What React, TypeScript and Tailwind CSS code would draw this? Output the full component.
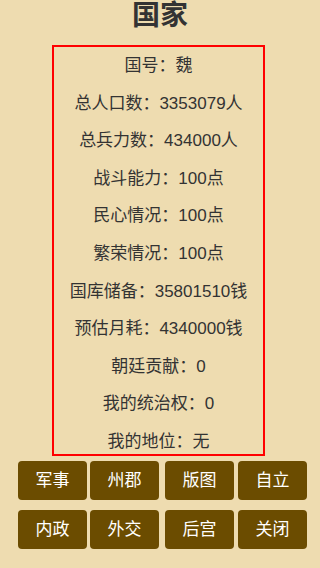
const rows = [
  "国号：魏",
  "总人口数：3353079人",
  "总兵力数：434000人",
  "战斗能力：100点",
  "民心情况：100点",
  "繁荣情况：100点",
  "国库储备：35801510钱",
  "预估月耗：4340000钱",
  "朝廷贡献：0",
  "我的统治权：0",
  "我的地位：无",
];

const row1 = [
  { label: "军事", cls: "ml-[18px]" },
  { label: "州郡", cls: "ml-[3px]" },
  { label: "版图", cls: "ml-[6px]" },
  { label: "自立", cls: "ml-[4px]" },
];

const row2 = [
  { label: "内政", cls: "ml-[18px]" },
  { label: "外交", cls: "ml-[3px]" },
  { label: "后宫", cls: "ml-[6px]" },
  { label: "关闭", cls: "ml-[4px]" },
];

function Btn({ label, cls }: { label: string; cls: string }) {
  return (
    <button
      className={`${cls} w-[69px] h-[39px] rounded-[4px] bg-[#6b4c00] text-white text-[17px] flex items-center justify-center`}
    >
      {label}
    </button>
  );
}

export default function App() {
  return (
    <div
      className="w-[320px] h-[568px] bg-[#eedcb0] text-[#333333] overflow-hidden"
      style={{ fontFamily: '"Liberation Sans", "Noto Sans CJK SC", sans-serif' }}
    >
      <h1 className="text-[28px] font-bold text-center leading-[32px]">国家</h1>
      <div className="ml-[52px] mt-[13px] w-[213px] h-[411px] border-2 border-[#ff0000] overflow-hidden">
        {rows.map((r) => (
          <div key={r} className="h-[37.6px] leading-[37.6px] text-center text-[17px] whitespace-nowrap">
            {r}
          </div>
        ))}
      </div>
      <div className="flex mt-[5px]">
        {row1.map((b) => (
          <Btn key={b.label} {...b} />
        ))}
      </div>
      <div className="flex mt-[10px]">
        {row2.map((b) => (
          <Btn key={b.label} {...b} />
        ))}
      </div>
    </div>
  );
}
